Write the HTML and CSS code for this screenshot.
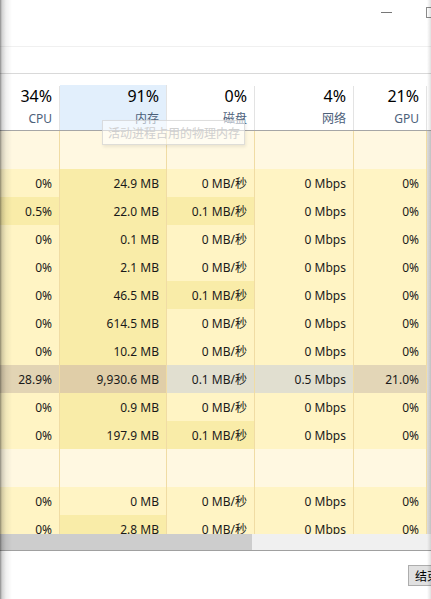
FILE: index.html
```html
<!DOCTYPE html>
<html lang="zh-CN">
<head>
  <meta charset="UTF-8" />
  <title>任务管理器</title>
  <link rel="stylesheet" href="styles.css">
</head>
<body>
  <div class="window">

    <div class="titlebar">
      <span class="btn-min"></span>
      <span class="btn-max"></span>
    </div>
    <div class="tabbar"></div>
    <div class="spacer"></div>

    <div class="grid head">
      <div class="hcell"><div class="pct">34%</div><div class="label">CPU</div></div>
      <div class="hcell sorted"><div class="pct">91%</div><div class="label">内存</div></div>
      <div class="hcell"><div class="pct">0%</div><div class="label">磁盘</div></div>
      <div class="hcell"><div class="pct">4%</div><div class="label">网络</div></div>
      <div class="hcell"><div class="pct">21%</div><div class="label">GPU</div></div>
    </div>

    <div class="body">
      <div class="grid group">
        <div class="cell"></div><div class="cell"></div><div class="cell"></div><div class="cell"></div><div class="cell"></div>
      </div>

      <div class="grid row">
        <div class="cell lo">0%</div><div class="cell mid">24.9 MB</div><div class="cell lo">0 MB/秒</div><div class="cell lo">0 Mbps</div><div class="cell lo">0%</div>
      </div>
      <div class="grid row">
        <div class="cell mid">0.5%</div><div class="cell mid">22.0 MB</div><div class="cell mid">0.1 MB/秒</div><div class="cell lo">0 Mbps</div><div class="cell lo">0%</div>
      </div>
      <div class="grid row">
        <div class="cell lo">0%</div><div class="cell mid">0.1 MB</div><div class="cell lo">0 MB/秒</div><div class="cell lo">0 Mbps</div><div class="cell lo">0%</div>
      </div>
      <div class="grid row">
        <div class="cell lo">0%</div><div class="cell mid">2.1 MB</div><div class="cell lo">0 MB/秒</div><div class="cell lo">0 Mbps</div><div class="cell lo">0%</div>
      </div>
      <div class="grid row">
        <div class="cell lo">0%</div><div class="cell mid">46.5 MB</div><div class="cell mid">0.1 MB/秒</div><div class="cell lo">0 Mbps</div><div class="cell lo">0%</div>
      </div>
      <div class="grid row">
        <div class="cell lo">0%</div><div class="cell mid">614.5 MB</div><div class="cell lo">0 MB/秒</div><div class="cell lo">0 Mbps</div><div class="cell lo">0%</div>
      </div>
      <div class="grid row">
        <div class="cell lo">0%</div><div class="cell mid">10.2 MB</div><div class="cell lo">0 MB/秒</div><div class="cell lo">0 Mbps</div><div class="cell lo">0%</div>
      </div>
      <div class="grid row hover">
        <div class="cell h-cpu">28.9%</div><div class="cell h-mem">9,930.6 MB</div><div class="cell h-io">0.1 MB/秒</div><div class="cell h-io">0.5 Mbps</div><div class="cell h-gpu">21.0%</div>
      </div>
      <div class="grid row">
        <div class="cell lo">0%</div><div class="cell mid">0.9 MB</div><div class="cell lo">0 MB/秒</div><div class="cell lo">0 Mbps</div><div class="cell lo">0%</div>
      </div>
      <div class="grid row">
        <div class="cell lo">0%</div><div class="cell mid">197.9 MB</div><div class="cell mid">0.1 MB/秒</div><div class="cell lo">0 Mbps</div><div class="cell lo">0%</div>
      </div>

      <div class="grid group">
        <div class="cell"></div><div class="cell"></div><div class="cell"></div><div class="cell"></div><div class="cell"></div>
      </div>

      <div class="grid row">
        <div class="cell lo">0%</div><div class="cell lo">0 MB</div><div class="cell lo">0 MB/秒</div><div class="cell lo">0 Mbps</div><div class="cell lo">0%</div>
      </div>
      <div class="grid row">
        <div class="cell lo">0%</div><div class="cell mid">2.8 MB</div><div class="cell lo">0 MB/秒</div><div class="cell lo">0 Mbps</div><div class="cell lo">0%</div>
      </div>
    </div>

    <div class="hscroll"><div class="thumb"></div></div>

    <div class="footer">
      <button class="end-task">结束任务</button>
    </div>

    <!-- overlays -->
    <div class="tooltip">活动进程占用的物理内存</div>
    <div class="shade-left"></div>
    <div class="shade-right"></div>
  </div>
</body>
</html>
```

FILE: styles.css
```css
body {
  margin: 0;
  background: #fff;
  font-family: 'Noto Sans', 'Noto Sans CJK SC', sans-serif;
  color: #000;
}

.window {
  position: relative;
  width: 431px;
  height: 599px;
  overflow: hidden;
  background: #fff;
}

/* top of the window */
.titlebar {
  height: 47px;
  border-bottom: 1px solid #f0f0f0;
  display: flex;
  align-items: flex-start;
  justify-content: flex-end;
  box-sizing: border-box;
}

.btn-min {
  width: 11px;
  height: 1px;
  margin-top: 12px;
  margin-right: 34px;
  background: #777;
  flex-shrink: 0;
}

.btn-max {
  width: 9px;
  height: 9px;
  margin-top: 7px;
  margin-right: -6px;
  border: 1px solid #8a8a8a;
  flex-shrink: 0;
}

.tabbar {
  height: 26px;
  border-bottom: 1px solid #d9d9d9;
}

.spacer {
  height: 11px;
}

/* columns */
.grid {
  display: grid;
  grid-template-columns: 60px 107px 88px 99px 73px;
  width: 427px;
}

.head {
  height: 45px;
  border-bottom: 1px solid #a6a6a6;
  width: 431px;
}

.hcell {
  border-right: 1px solid #e3e3e3;
  text-align: right;
  padding-right: 7px;
  margin-top: 1px;
}

.hcell.sorted {
  background: #e2effc;
  margin-top: 0;
  padding-top: 1px;
}

.pct {
  font-size: 16px;
  line-height: 20px;
  color: #000;
}

.label {
  font-size: 12px;
  line-height: 16px;
  padding-top: 5px;
  color: #4c607a;
}

.body {
  height: 403px;
  overflow: hidden;
  background: linear-gradient(to right, #f6f6f6, #dcdcdc);
}

.row {
  height: 28px;
}

.group {
  height: 38px;
}

.cell {
  border-right: 1px solid #f0dca4;
  text-align: right;
  padding: 1px 7px 0 0;
  font-size: 12px;
  line-height: 27px;
  color: #1a1a1a;
  white-space: nowrap;
}

.group .cell {
  background: #fff8e1;
}

.lo { background: #fff4c4; }
.mid { background: #f9eca8; }

.h-cpu { background: #e2d4b4; }
.h-mem { background: #e0cea8; }
.h-io { background: #e1dfd0; }
.h-gpu { background: #e3d6b7; }

/* bottom */
.hscroll {
  height: 16px;
  background: #f0f0f0;
  border-bottom: 1px solid #a0a0a0;
}

.thumb {
  width: 252px;
  height: 16px;
  background: #cdcdcd;
}

.footer {
  height: 47px;
  display: flex;
  justify-content: flex-end;
  padding-top: 14px;
  box-sizing: border-box;
}

.end-task {
  height: 21px;
  width: 80px;
  margin-right: -57px;
  flex-shrink: 0;
  padding: 0 0 0 6px;
  text-align: left;
  background: #e1e1e1;
  border: 1px solid #adadad;
  font-family: 'Noto Sans CJK SC', sans-serif;
  font-size: 12px;
  line-height: 19px;
  color: #000;
}

.tooltip {
  position: absolute;
  left: 102px;
  top: 120px;
  width: 143px;
  height: 25px;
  box-sizing: border-box;
  padding-left: 5px;
  background: rgba(255, 255, 255, 0.55);
  border: 1px solid rgba(200, 200, 200, 0.6);
  box-shadow: 1px 2px 3px rgba(0, 0, 0, 0.08);
  font-family: 'Noto Sans CJK SC', sans-serif;
  font-size: 12px;
  line-height: 23px;
  color: #cfcfcf;
  white-space: nowrap;
}

.shade-left {
  position: absolute;
  left: 0;
  top: 0;
  bottom: 0;
  width: 12px;
  background: linear-gradient(to right, rgba(0, 0, 0, 0.45) 0, rgba(0, 0, 0, 0.18) 2px, rgba(0, 0, 0, 0.06) 6px, rgba(0, 0, 0, 0) 12px);
}

.shade-right {
  position: absolute;
  right: 0;
  top: 0;
  bottom: 0;
  width: 4px;
  background: linear-gradient(to right, rgba(0, 0, 0, 0), rgba(0, 0, 0, 0.12));
}
```
